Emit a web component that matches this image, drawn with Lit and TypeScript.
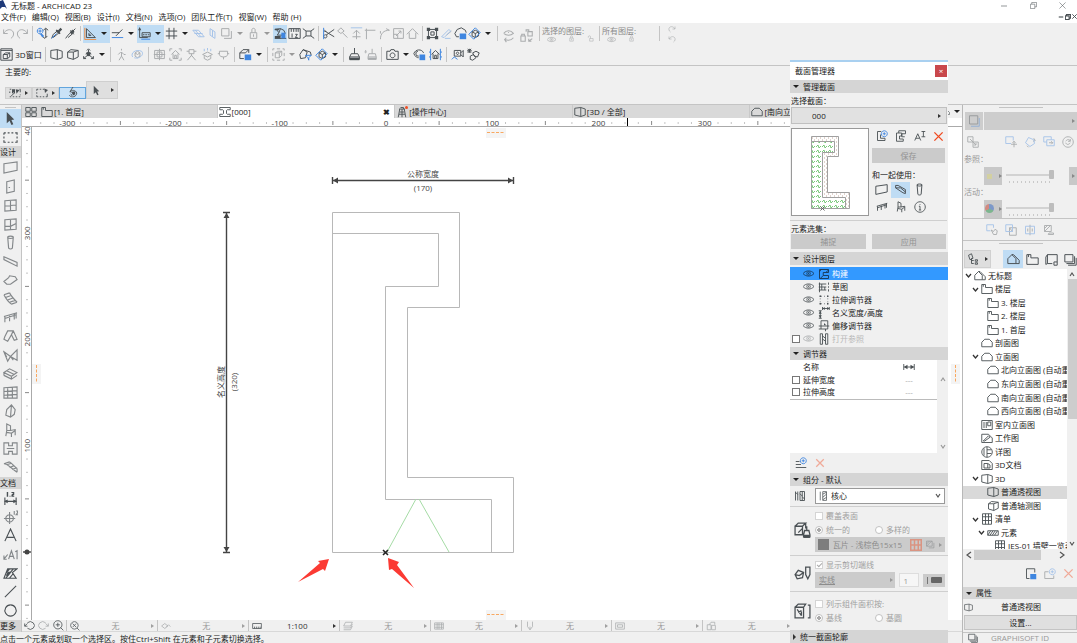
import { LitElement, html, svg, css, nothing } from "lit";
import { customElement, property } from "lit/decorators.js";
import { classMap } from "lit/directives/class-map.js";

/* Icon shapes on a 16x16 grid: d = main stroke, b = blue stroke, f = filled, g = blue fill, o = orange stroke, r = red stroke */
type Shape = { d?: string; b?: string; f?: string; g?: string; o?: string; r?: string };
const ICONS: Record<string, Shape> = {
  undo: { d: "M2 3V8H7M2 8C5 3 10 2 13 5C15.500 8 14 12 11 14" },
  redo: { d: "M14 3V8H9M14 8C11 3 6 2 3 5C.5 8 2 12 5 14" },
  find: { d: "M12 2V13M9 4L12 1.500L15 4M7 11L11 14L14 11", b: "M5 1.500A3.500 3.500 0 1 0 5.100 1.500M5 3V7M3 5H7", g: "M7 8L10 11L8 13L5 9Z" },
  dropper: { d: "M2 14L4 9L9 5M4 13L10 8", f: "M8 3L10 4L13 1L15 3L12 6L13 8L11 9L7 5Z", b: "M2 14L8 8" },
  syringe: { d: "M2 14L5 10L10 5M5 13L12 7M8 4L12 9M11 5L14 2", f: "M7 6L11 3L13 6L9 9Z" },
  triangle: { d: "M3 2V13H14ZM6 8V10.500H8.500Z", o: "M1 1V15.500H15" },
  snapline: { d: "M1 7H10M6 11L14 3", b: "M1 13H15" },
  coords: { d: "M2 2V13M2 13H12M5 7H15V12H5Z", f: "M0 4L2 0L4 4ZM6 9H8V10H6ZM9 9H11V10H9ZM12 9H14V10H12Z", b: "M4 15H15" },
  hash: { d: "M5 1V15M11 1V15M1 5H15M1 11H15" },
  planeA: { b: "M1 4H8L15 12H8ZM4 4L11 12M3 8H13" },
  planeB: { b: "M5 2L11 6V14L5 10ZM8 4V12" },
  layers: { d: "M2 2H11V11H2ZM5 14H14V5" },
  lock: { d: "M4 7H12V14H4ZM6 7V3.500C6 1 10 1 10 3.500V7M8 9V12" },
  unlock: { d: "M6 8H14V14H6ZM8 8V4C8 1 3 1 3 4V6" },
  crane: { d: "M1 3L8 2L12 4L14 8M3 3L6 7L4 10M8 2L6 7M4 10H12M1 14H15M2 12H8", f: "M1 11H8V14H1ZM1 2H6V4H1Z", g: "M9 7H14V14H9Z" },
  ruler: { d: "M1 2V14H15V2M1 2H15M4 2V6M7 2V6M10 2V6M12.500 2V6M5 8V13M9 9H11.500L9 13H12" },
  cross: { d: "M1 2L5 5M15 2L11 5M1 14L5 11M15 14L11 11M5 5H11V11H5Z" },
  scissors: { d: "M15 3L5 10M15 12L5 6M4 9.500A2 2 0 1 0 4.100 9.500", b: "M2 1V15", f: "M3 3L6 6L3 6Z" },
  wand: { d: "M2 5L6 1L10 5L6 8ZM8 7L14 13" },
  extend: { b: "M1 1H15", d: "M8 4V15M4 8L8 4L12 8M3 12H13" },
  corner: { d: "M3 15V4H14M1 4H3M3 2V4" },
  arc: { d: "M3 15C3 8 7 4 14 4M3 8V5M10 2L14 4" },
  resize: { d: "M2 2H14V14H2ZM5 11L11 5M8 5H11V8M2 9H7V14" },
  house: { d: "M1 9L8 2L15 9M4 7V14H12V7" },
  group: { d: "M3 3H13V13H3ZM6 6H10V10H6Z", f: "M1 1H5V5H1ZM11 1H15V5H11ZM1 11H5V15H1ZM11 11H15V15H11Z" },
  pens: { b: "M2 12L11 3L13 5L5 13ZM6 14H13", d: "M8 10L14 5" },
  cloud: { d: "M6 12H3L1 8L4 3L9 1L14 4L15 7", g: "M7 8H15V15H7Z" },
  orbit: { d: "M5 6L9 4L13 6V11L9 13L5 11ZM5 6L9 8L13 6M9 8V13", b: "M1 9L9 1L15 7L7 15Z" },
  eyeswap: { d: "M2 5C5 1 10 1 13 5C10 8 5 8 2 5M7 4H8M13 10C10 14 6 13 3 12M5 10L3 12L5 15" },
  lockswap: { d: "M1 8H6V14H1ZM2 8V6H5V8M9 3H14V8H9ZM7 3V1H10V3M14 11L10 14M10 11V14H13" },
  win3d: { d: "M1 1H15V15H1ZM1 3H15M4 8H9V13H4ZM4 8L7 6H12L9 8M12 6V11L9 13" },
  box1: { d: "M1 3L9 2V14L1 12ZM9 2L15 4V12L9 14" },
  box2: { d: "M2 5H9V14L2 12ZM2 5L6 2L15 3L9 5M15 3V11L9 14" },
  axes: { d: "M8 8V2M8 8L2 13M8 8L14 13M6 3L8 1L10 3M2 10V13H5M14 10V13H11M5 8A3 3 0 0 1 11 8", f: "M6 6H10V10H6Z" },
  walk: { d: "M8 1V3M7 5L4 8M8 5L11 8L13 8M8 5V10L5 15M8 10L11 15" },
  globe: { d: "M5 6L8 4L11 6V10L8 12L5 10ZM5 6L8 8L11 6", b: "M2 11C-1 6 6 1 13 4C17 8 10 14 4 12" },
  frame: { d: "M2 3H14V13H2ZM8 1V15M1 8H15M5 5H11V11H5Z" },
  homeFrame: { d: "M1 4V1H4M12 1H15V4M15 12V15H12M4 15H1V12M3 8L8 3L13 8M5 7V13H11V7M7 13V9H9V13" },
  tripod: { d: "M5 2H11V7H5ZM8 7V10M3 15L8 9L13 15M2 4H5M11 4H14" },
  rain: { d: "M2 8L8 5L14 8L8 11ZM4 10V13L8 15L12 13V10", b: "M4 1V4M8 0V3M12 1V4" },
  bulb: { d: "M3 4H13V8C13 12 3 12 3 8ZM1 7H3M13 7H15M8 11V14" },
  boxBlue: { d: "M6 13H1V6H8M1 6L5 2H12L8 6M12 2V6", g: "M7 8H15V15H7Z" },
  dashbox: { d: "M1 1H3M6 1H10M13 1H15V3M15 6V10M15 13V15H13M10 15H6M3 15H1V13M1 10V6M1 3V1M4 6H9V12H4ZM4 6L7 4H12L9 6M12 4V9L9 12" },
  funnelBox: { d: "M1 8L5 2L10 5L8 12L2 13ZM5 2L14 5L15 9", b: "M8 9H15L12 12V15L11 12Z" },
  brush: { d: "M8 0V7M2 11L4 7H12L14 11V14H2ZM2 11H14", f: "M2 12H14V15H2Z" },
  brush2: { d: "M10 1V7M5 11L6 7H14L15 11V14H5ZM5 11H15M2 3C0 7 4 7 2 3", f: "M5 12H15V14H5Z" },
  camera: { d: "M1 4H5L6 2H10L11 4H15V14H1ZM8 6A3 3 0 1 0 8.100 6" },
  eyeBlue: { d: "M1 7C3 1 11 1 13 6M1 7C3 11 5 12 7 12M6 4A3 3 0 1 0 7 10", g: "M8 8H15V15H8Z" },
  homeBlue: { d: "M3 8L8 3L13 8M5 7V13H11V7M7 13V9H9V13", b: "M2 1V15M14 1V15M0 5H2M14 5H16M0 11H2M14 11H16" },
  camMove: { d: "M4 3H12V10H4ZM12 6L15 3V11L12 8M8 5A1.500 1.500 0 1 0 8.100 5", b: "M1 14L4 11L8 14" },
  sunbox: { d: "M3 1V6M0 3.500H6M1 1L5 6M5 1L1 6M7 6L11 4L15 6L13 11L9 10ZM4 10L8 8L11 12L7 15L4 14Z" },
  cursor: { f: "M4 1L12 9L9 9.500L11 14L9 15L7 10.500L4 13Z" },
  marquee: { d: "M1 3H3M5 3H7M9 3H11M13 3H15V5M15 7V9M15 11V13H13M11 13H9M7 13H5M3 13H1V11M1 9V7M1 5V3" },
  marqueeSel: { d: "M1 3H3M5 3H7M9 3H11M15 9V13H13M11 13H9M7 13H5M3 13H1V11M1 9V7M1 5V3", f: "M11 2L16 4L12 8Z" },
  selArrow: { d: "M1 3H3M1 13H3M5 13H7M9 13H11M13 13H15M1 6V8M15 10V11M3 12L7 8M14 3H15V7", f: "M4 3H8V9L6 7L4 9ZM9 3L14 4L10 9Z" },
  magnet: { d: "M4 7C5 3 12 4 13 8C13 13 6 15 3 11M8 0L4 6L9 8M7 8L9 11M5 9L7 12", f: "M7 6L11 6L11 10L8 11Z" },
  wall: { d: "M1 4L15 2V11L1 14Z" },
  door: { d: "M4 3L12 1V13L4 15ZM6 9H7.500" },
  window: { d: "M2 3L14 2V13L2 14ZM8 3V14M2 8.500L14 7.500" },
  windowB: { d: "M2 3L14 2V13L2 14ZM8 3V14M2 10H8L14 7" },
  column: { d: "M5 2C6 1 10 1 11 2L10 14C9 15 7 15 6 14ZM5 3C7 4 9 4 11 3" },
  beam: { d: "M1 3L15 9V13L1 6Z" },
  beamSel: { d: "M2 3L5 3L14 8V13L11 12L2 6ZM2 6L8 6L14 11" },
  slab: { d: "M1 9L6 5L7 3L13 4L15 7L8 12L4 12Z" },
  stair: { d: "M1 4C3 8 6 12 9 14M7 2C9 6 12 9 15 12M1 4L7 2M2.500 7L8 5M5 9.500L10.500 7.500M7 12L13 10M9 14L15 12" },
  rail: { d: "M1 7L15 3M2 7V13M7 6V12M12 4V10M14 3V9M2 9L14 5" },
  roof: { d: "M2 8L5 2H11L15 11L12 12L9 6L5 13L1 11ZM9 6L11 2" },
  shell: { d: "M1 4L8 9L15 2V13L8 9L5 14ZM1 4L4 10M8 9L11 13" },
  mesh: { d: "M1 7L7 3L15 7L9 11ZM1 10L9 14L15 10M4 5L12 9M1 7V10M9 11V14" },
  patch: { d: "M1 4C5 4 9 9 15 13M7 2C10 4 12 7 15 9M1 4L7 2M4 5L9 3.500M7 8L12 6M15 9V13M10 10L14 8.500" },
  curtain: { d: "M1 3L15 2V14H1ZM5 3V14M10 2V14M1 7L15 6M1 11L15 10" },
  morph: { d: "M3 12L4 6L9 1L13 6L12 11L8 14ZM9 1L8 14" },
  chair: { d: "M4 1L8 3V8H4ZM4 8L3 14M8 8L13 7V13M4 10L9 11V15M9 11L13 8" },
  zone: { d: "M1 2H6V5H10V2H15V14H10V11H6V14H1ZM4 8H12" },
  dim: { d: "M2 7V15M14 7V15M2 11H14", f: "M1 11L5 9V13ZM15 11L11 9V13ZM4 1H5.500V6H4ZM7 5H8V6H7ZM9 1H12V4L10.500 5H12V6H9V4L11 2H9Z" },
  level: { d: "M7 5A4 4 0 1 0 7.100 5M7 2V15M1 9H13M12 1V5M14 1H15.500V3L14 5H16" },
  textA: { d: "M2 14L8 1L14 14M4.500 10H11.500" },
  labelA1: { d: "M1 13L5 8M1 9V13H4M6 13L9 4L12 13M7 10H11M13 5L15 4V13" },
  hatch: { d: "M1 13L5 3H15L10 7L14 13ZM3 8L7 3M3 13L11 3M7 13L11 8M4 6L7 3" , f: "M3 10L5 6L9 6L5 11Z" },
  line: { d: "M2 14L14 2" },
  circle: { d: "M8 2A6 6 0 1 0 8.100 2" },
  grid4: { d: "M1 2H7V7H1ZM9 2H15V7H9ZM1 9H7V14H1ZM9 9H15V14H9Z" },
  folder: { d: "M1 14V2H6V6H15V14ZM3 2V5" },
  section: { d: "M1 2H15V5H11L10 6V10L11 11H15V14H1V11H5L6 10V6L5 5H1Z" },
  tower: { d: "M5 4L3 15M11 4L13 15M4 4H12M6 2H10V4M5 8H11M4 11H12M8 4V15" },
  elevation: { d: "M1 13V7L5 3H11L15 7V13Z" },
  zoomPrev: { d: "M5 4A6 5.500 0 1 1 5 12M1 5V9H5M1 9L5 5" },
  zoomNext: { d: "M11 4A6 5.500 0 1 0 11 12M15 5V9H11M15 9L11 5" },
  zoomIn: { d: "M7 1A6 6 0 1 0 7.100 1M7 4V10M4 7H10M11 11L15 15" },
  zoomFit: { d: "M7 1A6 6 0 1 0 7.100 1M4 4L10 10M10 4L4 10M11 11L15 15" },
  angle: { d: "M1 8L6 4L11 8L6 12ZM8 10L12 6L15 9" },
  scale: { d: "M1 4H15V12H1ZM4 9V12M7 9V12M10 9V12M13 9V12" },
  stack: { d: "M4 2H15L12 8H1ZM1 11H12L15 5M1 14H12L15 8" },
  keys: { d: "M1 3H15V13H1ZM1 6H15M1 10H15M5 3V13M8 3V13M12 3V13" },
  pen: { d: "M4 1V9L8 14L12 9V1M8 9V14" },
  rect2: { d: "M1 3H15V13H1ZM4 6H12V10H4Z" },
  revise: { d: "M2 6H8V14H2ZM5 6L8 2H14V6M9 7H15V14H9Z" },
  newProfile: { d: "M7 2H2V14H12V11H6V6", b: "M11 1A4 4 0 1 0 11.100 1M11 3V7M9 5H13" },
  dupProfile: { d: "M9 4H2V15H11V12H6V8H9ZM5 4V1H14V5H9V9H13" },
  rename: { d: "M1 14L5 5L9 14M2.500 11H7.500M10 2H15M12.500 2V9M10 9H15" },
  del: { r: "M2 2L14 14M14 2L2 14" },
  info: { d: "M8 1A7 7 0 1 0 8.100 1M8 7V12M6.500 7H8M6.500 12H9.500M8 4V5" },
  eye: { d: "M0 8C4 3 12 3 16 8C12 13 4 13 0 8M8 5.500A2.500 2.500 0 1 0 8.100 5.500M8 7V9" },
  cshape: { d: "M14 2H2V14H14V10H7V6H14ZM14 3L11 5M4 2L2 5M7 10L3 14" },
  draft: { d: "M2 2V15M1 4H11M1 8H11M1 12H11M5 4V12M9 8V12M14 2V5M14 7V9M14 11V14" },
  stretch: { d: "M3 3H5M8 3H9M12 3H13M3 13H5M8 13H9M12 13H13M3 6V7M3 10V11M13 6V7M13 10V11", f: "M2 2H4V4H2ZM12 2H14V4H12ZM2 12H4V14H2ZM12 12H14V14H12Z" },
  nominal: { d: "M3 5V15M1 5H5M1 15H5M6 2H15M6 0V4M15 0V4", f: "M3 5L5 9H1ZM3 15L5 11H1ZM6 2L9 0V4ZM15 2L12 0V4Z" },
  offset: { d: "M4 1H13V12H4ZM1 8H15M10 12V15M1 12H4", f: "M8 4L11 7H8Z" },
  opening: { d: "M3 1H6V15H3ZM10 1H13V15H10ZM6 4L10 7M6 8L10 11" },
  width: { d: "M1 4V12M15 4V12M2 8H14", f: "M1 8L6 5V11ZM15 8L10 5V11Z" },
  addLine: { d: "M1 6H6M1 14H15M1 10H8", b: "M11 1A4 4 0 1 0 11.100 1M11 3V7M9 5H13" },
  component: { d: "M2 2V14M5 2V14M2 3L5 6M8 2H14V14H8ZM11 2V14M8 5L11 8M11 9L14 12" },
  core: { d: "M6 1H12V15H6ZM6 5L12 2M6 10L12 5M6 14L12 10M2 1V15" },
  cover: { d: "M1 4H8V12H1ZM1 4L4 1H11L8 4M11 6V1M4 10L8 6M12 4V8M9 12L10 8H14L15 12V14H9Z", f: "M9 12H15V15H9Z" },
  cutEnd: { d: "M1 9L4 5L9 7L8 12L3 13ZM1 9L5 10L9 7M11 2H15V9L13 13L11 9Z" },
  listing: { d: "M1 4H9V14H1ZM1 4L4 1H11L9 4M3 6L7 12M7 7L4 9M7 12V8M13 2H15V14H13" },
  swap: { d: "M1 1H8V8H1ZM8 8H15V15H8ZM4 4L12 12M9 12H12V9" },
  moveSq: { b: "M8 10H1V1H11V6", d: "M12 7V15M8 11H16M10 9L12 7L14 9" },
  rotSq: { b: "M2 9L6 2L13 5L14 10L8 14Z", d: "M13 3L15 6L12 7M6 15L4 13" },
  syncSq: { b: "M5 8H1V1H11V5M5 5H15V13H5Z", d: "M8 9H13M11 7L13 9L11 11" },
  refresh: { d: "M8 1A7 7 0 1 0 8.100 1M5 7C7 4 10 4 11 7M11 9C9 12 6 12 5 9M11 4V7H8" },
  square2: { d: "M2 1H13V12H2Z", b: "M4 15H15V4" },
  handSq: { b: "M6 9H1V1H10V5", d: "M7 8L10 14H14L15 9L12 7L10 10Z" },
  overlap: { b: "M1 1H10V10H1Z", d: "M6 5H15V15H6ZM6 5L10 10" },
  splitSq: { b: "M2 3H14V13H2Z", d: "M8 1V15M5 6V10M11 6V10" },
  erase: { d: "M2 2H11V10H2ZM2 6L6 2M2 10L10 2M8 12H14V14H7Z" },
  pencilTree: { d: "M2 3L6 1L8 7L4 9ZM6 7V14H9M6 10H9M11 9H14V11H11ZM11 13H14V15H11Z" },
  homes: { d: "M1 13V7L6 2L11 7V13ZM6 2H8L15 9V13H11" },
  pages: { d: "M3 13V2H15V11M3 13L1 14V5L3 2M3 13H9M11 11H15V15H11Z" },
  docs: { d: "M1 2H11V11H1ZM3 13H13V4M5 15H15V6" },
  interior: { d: "M1 2H15V14H1ZM4 4V12M7 4V12M9 4H13V9H9Z" },
  worksheet: { d: "M1 14V3H10L15 8V14ZM3 12L10 5L12 7L5 12Z" },
  detail: { d: "M8 1A7 7 0 1 0 8.100 1M8 1V15M4 3V13M8 5H14M8 10H14" },
  doc3d: { d: "M1 14V2H11L15 6V14ZM4 6H9V12H4ZM9 6L12 8V12H9" },
  schedule: { d: "M2 1H14V15H2ZM6 1V15M10 1V15M2 5H14M2 10H14" },
  hatchbar: { d: "M1 5H15V11H1ZM1 11L5 5M4 11L8 5M7 11L11 5M10 11L14 5" },
  saveView: { d: "M6 14H2V1H13V6", g: "M7 8H15V15H7Z" },
  newView: { d: "M6 5H1V14H13V10", b: "M11 1A4 4 0 1 0 11.100 1M11 3V7M9 5H13" },
  hatchFill: { d: "M1 2H11V11H1ZM1 7L6 2M1 11L10 2M5 14H14V5" },
  tile: { r: "M1 1H15V15H1ZM6 1V15M11 1V15M1 8H15" },
  winmin: { d: "M2 8H14" },
  winmax: { d: "M1 5H11V15H1ZM4 5V1H15V11H11" },
  winclose: { d: "M1 1L15 15M15 1L1 15" },
};

const icon = (name: string, size = 13, cls = "") => {
  const s = ICONS[name] ?? {};
  return html`<svg class="icon ${cls}" width=${size} height=${size} viewBox="0 0 16 16" aria-hidden="true">
    ${s.d ? svg`<path class="s" d=${s.d}/>` : nothing}${s.b ? svg`<path class="b" d=${s.b}/>` : nothing}
    ${s.f ? svg`<path class="f" d=${s.f}/>` : nothing}${s.g ? svg`<path class="g" d=${s.g}/>` : nothing}
    ${s.o ? svg`<path class="o" d=${s.o}/>` : nothing}${s.r ? svg`<path class="r" d=${s.r}/>` : nothing}</svg>`;
};

const chevron = (d: string) => html`<svg class="ch" width="6" height="10" viewBox="0 0 6 10" aria-hidden="true"><path d=${d}/></svg>`;
const UP = "M1 7L3 4L5 7", DOWN = "M1 3L3 6L5 3", LEFT = "M5 2L1 5L5 8", RIGHT = "M1 2L5 5L1 8";

const base = css`
  *, *::before { box-sizing: border-box; }
  :host { font: 8px/12px "Open Sans", "Noto Sans CJK SC", sans-serif; color: #222; }
  button, input, select { font: inherit; color: inherit; margin: 0; padding: 0; border: 0; background: none; }
  button { display: flex; align-items: center; justify-content: center; white-space: nowrap; }
  .icon { display: block; flex: none; }
  .icon path { fill: none; stroke-width: 1.2; }
  .icon .s { stroke: #4a5054; }
  .icon .b { stroke: #3f86e0; }
  .icon .f { fill: #4a5054; }
  .icon .g { fill: #3f86e0; }
  .icon .o { stroke: #f08a3c; }
  .icon .r { stroke: #f04a20; stroke-width: 2; }
  .dim { opacity: 0.42; }
  .tri { width: 0; height: 0; flex: none; border: 3px solid transparent; border-left: 3px solid #333; border-right: 0; }
  .tri.small { border-width: 2px; border-left-width: 3px; border-right-width: 0; }
  .tri.down { border: 3px solid transparent; border-top: 3px solid #222; border-bottom: 0; }
  .ch { display: block; flex: none; }
  .ch path { fill: none; stroke: #555; stroke-width: 1.2; }
  .section { display: flex; align-items: center; gap: 4px; width: 100%; height: 13px; padding: 0 3px; background: #d5d5d5; justify-content: flex-start; }
  input[type="range"] { appearance: none; width: 48px; height: 12px; }
  input[type="range"]::-webkit-slider-runnable-track { height: 2px; background: #d2d2d2; }
  input[type="range"]::-webkit-slider-thumb { appearance: none; width: 5px; height: 9px; margin-top: -4px; background: #bdbdbd; border-radius: 1px; }
  input[type="checkbox"] { appearance: none; flex: none; width: 8px; height: 8px; border: 1px solid #777; background: #fff; }
  input[type="radio"] { appearance: none; flex: none; width: 8px; height: 8px; border: 1px solid #c2c2c2; border-radius: 50%; background: #fff; }
  input[type="radio"]:checked { background: radial-gradient(#aaa 2px, #fff 2px); }
`;

type Tool = string;
/* "|" separator, "v" menu arrow, leading "-" disabled, leading "*" active */
const BAR1: Tool[] = ["-undo", "-redo", "|", "find", "dropper", "syringe", "|", "*triangle", "*v", "snapline", "v", "*coords", "*v", "hash", "v", "-planeA", "-planeB", "-layers", "-v", "-lock", "-v", "*crane", "ruler", "cross", "|", "scissors", "-wand", "-extend", "-corner", "-arc", "-resize", "-house", "|", "group", "-pens", "cloud", "orbit", "v", "|"];
const BAR2: Tool[] = ["box1", "box2", "axes", "v", "|", "-walk", "-globe", "|", "-frame", "-homeFrame", "-tripod", "-rain", "-bulb", "|", "boxBlue", "v", "|", "-dashbox", "-v", "funnelBox", "orbit", "v", "|", "brush", "-brush2", "|", "camera", "v", "eyeBlue", "homeBlue", "|", "camMove", "sunbox"];

@customElement("tool-bars")
class ToolBars extends LitElement {
  static styles = [base, css`
    :host { display: block; background: #f0f0f0; }
    .bar { display: flex; align-items: center; height: 21px; padding-left: 1px; }
    .bar + .bar { border-bottom: 1px solid #c4c4c4; padding-left: 0; height: 22px; }
    .t { width: 14px; height: 18px; flex: none; }
    .wide .t { width: 16px; }
    .t.v { width: 13px; }
    .wide .t.v { width: 11px; }
    .t.on { background: #bfdcf4; }
    .sep { width: 6px; height: 15px; flex: none; display: flex; justify-content: center; }
    .sep::before { content: ""; width: 1px; background: #c4c4c4; }
    .win { width: 42px; gap: 2px; }
    .pair { display: flex; gap: 4px; padding: 4px 2px 0 2px; }
    .layers { display: flex; flex-direction: column; width: 54px; color: #8a8a8a; line-height: 9px; padding-top: 2px; }
    .layers div { display: flex; gap: 12px; padding-left: 5px; }
    .spin { display: flex; flex-direction: column; gap: 2px; padding-left: 6px; }
    .options { height: 39px; padding: 0 5px; border-bottom: 1px solid #c4c4c4; line-height: 11px; }
    .strip { display: flex; align-items: flex-end; padding-top: 4px; }
    .opt { width: 27px; height: 12px; gap: 4px; background: #dfdfdf; border: 1px solid #cfcfcf; }
    .opt.on { background: #c9e2f7; border-color: #62a5dd; }
    .opt.tall { width: 32px; height: 18px; gap: 9px; }
  `];
  tool(t: Tool) {
    if (t === "|") return html`<span class="sep"></span>`;
    const off = t[0] === "-", on = t[0] === "*";
    const name = off || on ? t.slice(1) : t;
    return html`<button class=${classMap({ t: true, v: name === "v", on })} ?disabled=${off} aria-label=${name}>
      ${name === "v" ? html`<span class="tri down ${off ? "dim" : ""}"></span>` : icon(name, 13, off ? "dim" : "")}</button>`;
  }
  render() {
    return html`
      <div class="bar">${BAR1.map((t) => this.tool(t))}
        <div class="pair">${icon("eyeswap", 14, "dim")}${icon("lockswap", 14, "dim")}</div>
        <span class="sep"></span>
        <div class="layers"><span>选择的图层:</span><div>${icon("eye", 9, "dim")}${icon("lock", 7, "dim")}${icon("unlock", 7, "dim")}</div></div>
        <span class="sep"></span>
        <div class="layers"><span>所有图层:</span><div>${icon("eye", 9, "dim")}${icon("lock", 7, "dim")}</div></div>
        <span class="sep"></span>
        <div class="spin">${icon("redo", 8, "dim")}${icon("undo", 8, "dim")}</div>
      </div>
      <div class="bar wide"><button class="win">${icon("win3d", 13)}3D窗口</button><span class="sep"></span>${BAR2.map((t) => this.tool(t))}</div>
      <div class="options">主要的:
        <div class="strip">
          <button class="opt" aria-label="marquee">${icon("selArrow", 12)}<span class="tri small"></span></button>
          <button class="opt" aria-label="selection">${icon("marqueeSel", 12)}<span class="tri small"></span></button>
          <button class="opt on" aria-label="magnet">${icon("magnet", 12)}</button>
          <button class="opt tall" aria-label="arrow">${icon("cursor", 11)}<span class="tri small"></span></button>
        </div>
      </div>`;
  }
}

const DESIGN = ["wall", "door", "window", "windowB", "column", "beam", "slab", "stair", "rail", "roof", "shell", "mesh", "curtain", "morph", "chair", "zone", "patch"];
const DOCS = ["dim", "level", "textA", "labelA1", "hatch", "line", "circle"];

@customElement("tool-box")
class ToolBox extends LitElement {
  static styles = [base, css`
    :host { display: flex; flex-direction: column; width: 22px; flex: none; background: #f0f0f0; border-right: 1px solid #c4c4c4; }
    .grip { height: 3px; margin: 0 5px 1px; border-bottom: 1px solid #c4c4c4; }
    .tool { flex: 1 1 0; min-height: 0; width: 100%; padding-right: 1px; }
    .tool.on { background: #bfdcf4; }
    .head { height: 12px; background: #d5d5d5; line-height: 12px; white-space: nowrap; }
    .soft { opacity: 0.65; }
  `];
  render() {
    const tool = (n: string, cls = "", soft = "") => html`<button class="tool ${cls}" aria-label=${n}>${icon(n, 15, soft)}</button>`;
    return html`<div class="grip"></div>${tool("cursor", "on")}${tool("marquee")}
      <div class="head">设计</div>${DESIGN.map((n) => tool(n, "", "soft"))}
      <div class="head">文档</div>${DOCS.map((n) => tool(n, "", n === "level" || n === "labelA1" ? "soft" : ""))}
      <div class="head">更多</div>`;
  }
}

const TABS = [
  { icon: "folder", label: "[1. 首层]" },
  { icon: "section", label: "[000]", active: true },
  { icon: "tower", label: "[操作中心]", dot: true },
  { icon: "box1", label: "[3D / 全部]" },
  { icon: "elevation", label: "[南向立面图]" },
];
const QUICK = [["zoomFit", "无"], ["angle", "无"], ["scale", "1:100"], ["stack", "无"], ["keys", "无"], ["pen", "无"], ["rect2", "无"], ["revise", "无"]];

@customElement("profile-editor")
class ProfileEditor extends LitElement {
  static styles = [base, css`
    :host { display: flex; flex-direction: column; flex: 1; min-width: 0; background: #fff; }
    .tabs { display: flex; height: 13px; flex: none; background: #d9d9d9; }
    .tabs .all { width: 18px; }
    .tab { flex: 1 1 0; min-width: 0; justify-content: flex-start; gap: 1px; padding: 0 4px 0 1px; border-right: 1px solid #c9c9c9; overflow: hidden; }
    .tab.on { background: #fff; }
    .x { margin-left: auto; font-weight: bold; }
    .marked { position: relative; display: flex; }
    .dot { position: absolute; right: 0; top: 0; width: 3px; height: 3px; border-radius: 50%; background: #f04e23; }
    .ends { display: flex; align-items: center; justify-content: flex-end; gap: 4px; width: 34px; padding-right: 2px; background: #f0f0f0; }
    .top { display: flex; height: 9px; flex: none; border-bottom: 1px solid #aaa; }
    .mid { display: flex; flex: 1; min-height: 0; }
    .left { width: 10px; flex: none; border-right: 1px solid #aaa; }
    svg.fill { display: block; width: 100%; height: 100%; overflow: hidden; }
    .num { font-size: 8px; fill: #444; text-anchor: middle; }
    .tick { stroke: #888; }
    .cur { stroke: #000; stroke-width: 1; }
    .outline { fill: none; stroke: #b8b8b8; }
    .guide { fill: none; stroke: #a5dba5; }
    .dimline { fill: none; stroke: #444; stroke-width: 1.4; }
    .mark { fill: none; stroke: #222; stroke-width: 1.6; }
    .arrow { fill: #444; }
    .dimtext { font-size: 8px; fill: #444; text-anchor: middle; }
    .red { fill: #fb3a33; }
    .pad { fill: #f4f4f4; }
    .dash { stroke: #f9a860; stroke-dasharray: 3 1.5; }
    .quick { display: flex; height: 12px; flex: none; background: #f0f0f0; border-bottom: 1px solid #d8d8d8; }
    .zooms { display: flex; align-items: center; justify-content: space-around; width: 45px; flex: none; border-right: 1px solid #c4c4c4; }
    .q { flex: 1 1 0; justify-content: space-between; padding: 0 3px; border-right: 1px solid #c4c4c4; color: #999; }
    .q.live { color: #333; }
    .rest { flex: 2 2 0; }
  `];
  hTicks() {
    const out = [];
    for (let i = -26; i <= 42; i++) {
      const x = 364 + i * 13.28;
      if (i % 8 === 0) out.push(svg`<text class="num" x=${x} y="8">${(i / 8) * 100}</text>`);
      else out.push(svg`<path class="tick" d=${i % 4 === 0 ? `M${x} 3V7` : `M${x} 4.500V5.500`}/>`);
    }
    return out;
  }
  vTicks() {
    const out = [];
    for (let i = -5; i <= 31; i++) {
      const y = 425 - i * 13.28;
      if (i === 0) continue;
      if (i % 8 === 0) out.push(svg`<text class="num" transform="translate(8 ${y}) rotate(-90)">${(i / 8) * 100}</text>`);
      else out.push(svg`<path class="tick" d=${i % 4 === 0 ? `M3 ${y}H7` : `M4.500 ${y}H5.500`}/>`);
    }
    out.push(svg`<text class="num" transform="translate(8 4) rotate(-90)">40</text>`);
    return out;
  }
  render() {
    return html`
      <div class="tabs"><button class="all" aria-label="overview">${icon("grid4", 12)}</button>
        ${TABS.map((t) => html`<button class=${classMap({ tab: true, on: !!t.active })}>
          <span class="marked">${icon(t.icon, 12)}${t.dot ? html`<span class="dot"></span>` : nothing}</span>${t.label}
          ${t.active ? html`<span class="x">✖</span>` : nothing}</button>`)}
        <div class="ends">${icon("homes", 8)}<span class="tri down"></span></div></div>
      <div class="top"><svg class="fill">${this.hTicks()}<path class="cur" d="M605.500 0V9"/></svg></div>
      <div class="mid">
        <div class="left"><svg class="fill">${this.vTicks()}<path class="dimline" d="M1 425H9"/><circle class="arrow" cx="5" cy="425" r="2.500"/></svg></div>
        <svg class="fill" role="img" aria-label="000">
          <g transform="translate(354 425)">
            <path class="outline" d="M-53.500 -339.500H73.500V-244.500H21.500V-74.500H127.500V.5H-53.500ZM-53.500 -318.500H52.500V-265.500H-.5V-52.500H105.500V.5"/>
            <path class="guide" d="M1 0L30 -53M33 -53L63 0"/>
            <path class="dimline" d="M-53 -371.500H127M-53.500 -375V-368M127.500 -375V-368M-159.500 -339V0M-163 -339.500H-156M-163 .5H-156"/>
            <path class="arrow" d="M-53 -371.500L-48 -374.500V-368.500ZM127 -371.500L122 -374.500V-368.500ZM-159.500 -339L-162.500 -334H-156.500ZM-159.500 0L-162.500 -5H-156.500Z"/>
            <text class="dimtext" x="37" y="-375">公称宽度</text><text class="dimtext" x="37" y="-361">(170)</text>
            <text class="dimtext" transform="translate(-162 -170) rotate(-90)">名义高度</text>
            <text class="dimtext" transform="translate(-149 -170) rotate(-90)">(320)</text>
            <path class="mark" d="M-3 -2L2 3M2 -2L-3 3"/>
            <path class="red" d="M-57 7L-68 9L-66 11L-88 30L-63 17L-61 19ZM2 6L13 10L11 13L28 36L6 17L3 18Z"/>
            <rect class="pad" x="100" y="-424" width="20" height="10"/><path class="dash" d="M101 -419.500H119"/>
            <rect class="pad" x="100" y="58" width="20" height="10"/><path class="dash" d="M101 62.500H119"/>
            <rect class="pad" x="-354" y="-188" width="9" height="20"/><path class="dash" d="M-349.500 -187V-169"/>
            <rect class="pad" x="565" y="-188" width="9" height="20"/><path class="dash" d="M569.500 -187V-169"/>
          </g></svg>
      </div>
      <div class="quick"><div class="zooms">${icon("zoomPrev", 11)}${icon("zoomNext", 11, "dim")}${icon("zoomIn", 11)}</div>
        ${QUICK.map(([n, t]) => { const live = t !== "无"; return html`<button class=${classMap({ q: true, live })}>
          ${icon(n, 10, live || n === "zoomFit" ? "" : "dim")}${t}<span class="tri small ${live ? "" : "dim"}"></span></button>`; })}
        <div class="rest"></div></div>`;
  }
}

const LAYERS = [["cshape", "构建"], ["draft", "草图"], ["stretch", "拉伸调节器"], ["nominal", "名义宽度/高度"], ["offset", "偏移调节器"]];

@customElement("profile-manager")
class ProfileManager extends LitElement {
  static styles = [base, css`
    :host { display: flex; flex-direction: column; background: #f0f0f0; border-top: 2px solid #a9d0f0; overflow: hidden; }
    .title { display: flex; align-items: center; justify-content: space-between; height: 18px; flex: none; padding: 0 1px 0 5px; background: #fff; }
    .close { width: 12px; height: 12px; background: #c9484c; color: #fff; }
    .section { flex: none; }
    .lab { height: 13px; flex: none; padding: 0 1px; line-height: 16px; }
    .lab.first { height: 14px; }
    .pick { height: 17px; flex: none; justify-content: space-between; padding: 0 5px 0 20px; margin: 0 1px; background: #e1e1e1; border: 1px solid #c0c0c0; }
    .cols { display: flex; gap: 3px; padding: 4px 2px 4px 1px; flex: none; border-bottom: 1px solid #cfcfcf; margin-right: 1px; }
    .preview { width: 78px; height: 88px; flex: none; border: 1px solid #999; background: #fff; }
    .preview svg { display: block; }
    .side { flex: 1; min-width: 0; }
    .row { display: grid; grid-template-columns: repeat(4, 19px); align-items: center; height: 16px; }
    .row.use { height: 17px; }
    .row button { height: 16px; }
    .row .on { background: #bfdcf4; }
    .grey { flex: 1; width: 100%; height: 15px; background: #cbcbcb; color: #929292; }
    .side .grey { margin: 4px 0 6px; }
    .pairs { display: flex; gap: 6px; padding: 0 2px 3px 1px; flex: none; }
    .list { padding: 2px 0; flex: none; }
    .item { display: grid; grid-template-columns: 11px 15px 13px 1fr; align-items: center; height: 13px; padding: 0 2px; line-height: 13px; }
    .item .name { padding-left: 1px; }
    .item.on { background: #3399ff; color: #fff; }
    .item.on .s { stroke: #173450; }
    .item.off .name { color: #b8b8b8; }
    .adj { display: flex; height: 93px; flex: none; background: #fff; }
    .grid { flex: 1; }
    table { width: 100%; border-collapse: collapse; }
    td, th { padding: 0; height: 13px; font-weight: normal; text-align: left; }
    td { line-height: 12px; }
    .val { width: 56px; text-align: center; color: #aaa; }
    .val .icon { margin: 0 auto; }
    tbody { border-bottom: 1px solid #bbb; }
    td label { display: flex; align-items: center; gap: 3px; padding-left: 2px; }
    th:first-child { padding-left: 13px; }
    .vbar { flex: none; display: flex; flex-direction: column; justify-content: space-between; align-items: center; width: 11px; padding: 14px 0 1px; background: #f0f0f0; }
    .vbar path { stroke: #999; }
    .acts { display: flex; gap: 8px; align-items: center; height: 20px; padding-left: 5px; flex: none; }
    .block { display: grid; grid-template-columns: 25px 1fr; padding: 2px 3px 2px 0; border-bottom: 1px solid #cfcfcf; align-items: center; flex: none; }
    .block.tall { padding-bottom: 3px; }
    .block.last { border-bottom: 0; padding-top: 5px; }
    .block > .icon { margin-left: 4px; }
    .lines { display: flex; flex-direction: column; min-width: 0; color: #a0a0a0; }
    .lines > * { min-height: 13px; }
    .lines input[type="checkbox"] { border-color: #d4d4d4; }
    .lines input[type="checkbox"]:checked::before { content: ""; display: block; width: 5px; height: 3px; margin: 1px 0 0 1px; border: solid #aaa; border-width: 0 0 1px 1px; transform: rotate(-45deg); }
    label.c { display: flex; align-items: center; gap: 3px; }
    .lines .rads { display: grid; grid-template-columns: 60px 1fr; height: 15px; }
    .combo { display: flex; align-items: center; height: 16px; border: 1px solid #999; background: #fff; color: #222; padding-left: 3px; gap: 2px; }
    .combo select { appearance: none; flex: 1; height: 14px; outline: none; }
    .combo .ch { margin-right: 3px; }
    .mat { height: 15px; background: #cbcbcb; color: #8c8c8c; justify-content: flex-start; gap: 4px; padding: 0 3px; }
    .swatch { width: 11px; height: 11px; background: #7d7d7d; }
    .mat .tri, .ln .tri { border-left-color: #999; }
    .push { margin-left: auto; }
    .split { display: flex; gap: 4px; align-items: center; height: 18px; }
    .ln { width: 82px; height: 16px; background: #cbcbcb; color: #8c8c8c; justify-content: space-between; padding: 0 2px 0 4px; text-decoration: underline; }
    .num { width: 20px; height: 14px; padding-left: 3px; background: #f6f6f6; border: 1px solid #ddd; color: #999; }
    .penbox { width: 22px; height: 13px; background: #cbcbcb; gap: 3px; }
    .penbox::before { content: ""; width: 1px; height: 7px; background: #777; }
    .penbox .swatch { height: 6px; border-radius: 1px; background: #666; }
    .end { margin-top: auto; }
  `];
  render() {
    return html`
      <div class="title">截面管理器<button class="close" aria-label="close">×</button></div>
      <button class="section"><span class="tri down"></span>管理截面</button>
      <div class="lab first">选择截面：</div>
      <button class="pick">000<span class="tri small"></span></button>
      <div class="cols">
        <div class="preview"><svg width="76" height="86" viewBox="0 0 76 86">
          <defs>
            <pattern id="green" width="6" height="5" patternUnits="userSpaceOnUse"><path d="M0 3L2 1L3 4L5 2" fill="none" stroke="#6fc46f" stroke-width=".9"/></pattern>
            <pattern id="tan" width="4" height="4" patternUnits="userSpaceOnUse"><path d="M0 1H1M2 3H3" stroke="#c3a89c" stroke-width="1"/></pattern>
          </defs>
          <path d="M19.500 7.500H46.500V27.500H35.500V63.500H57.500V79.500H19.500Z" fill="url(#tan)" stroke="#a0a0a0"/>
          <path d="M19.500 12.500H42.500V23.500H30.500V68.500H53.500V79.500H19.500Z" fill="#fff"/>
          <path d="M19.500 12.500H42.500V23.500H30.500V68.500H53.500V79.500H19.500Z" fill="url(#green)" stroke="#a0a0a0"/>
          <path d="M28.500 77.500L32.500 81.500M32.500 77.500L28.500 81.500" stroke="#666"/>
        </svg></div>
        <div class="side">
          <div class="row"><button aria-label="new">${icon("newProfile", 12)}</button><button aria-label="duplicate">${icon("dupProfile", 12)}</button><button aria-label="rename">${icon("rename", 12)}</button><button aria-label="delete">${icon("del", 11)}</button></div>
          <button class="grey" disabled>保存</button>
          <div>和一起使用：</div>
          <div class="row use"><button aria-label="wall">${icon("wall", 13)}</button><button class="on" aria-label="beam">${icon("beamSel", 13)}</button><button aria-label="column">${icon("column", 13)}</button></div>
          <div class="row use"><button aria-label="rail">${icon("rail", 12)}</button><button aria-label="object">${icon("chair", 12)}</button><button aria-label="info">${icon("info", 12)}</button></div>
        </div>
      </div>
      <div class="lab">元素选集：</div>
      <div class="pairs"><button class="grey" disabled>捕捉</button><button class="grey" disabled>应用</button></div>
      <button class="section"><span class="tri down"></span>设计图层</button>
      <div class="list">
        ${LAYERS.map(([i, t], n) => html`
          <div class=${classMap({ item: true, on: n === 0 })}><span></span>${icon("eye", 11)}${icon(i, 12)}<span class="name">${t}</span></div>`)}
        <label class="item off"><input type="checkbox">${icon("eye", 11, "dim")}${icon("opening", 12)}<span class="name">打开参照</span></label>
      </div>
      <button class="section"><span class="tri down"></span>调节器</button>
      <div class="adj"><div class="grid"><table>
        <thead><tr><th>名称</th><th class="val">${icon("width", 12)}</th></tr></thead>
        <tbody><tr><td><label><input type="checkbox">延伸宽度</label></td><td class="val">---</td></tr>
        <tr><td><label><input type="checkbox">拉伸高度</label></td><td class="val">---</td></tr></tbody>
      </table></div><div class="vbar">${chevron(UP)}${chevron(DOWN)}</div></div>
      <div class="acts">${icon("addLine", 12)}${icon("del", 10, "dim")}</div>
      <button class="section"><span class="tri down"></span>组分 - 默认</button>
      <div class="block">${icon("component", 12)}<div class="combo">${icon("core", 10)}<select aria-label="component"><option>核心</option></select>${chevron(DOWN)}</div></div>
      <div class="block tall">${icon("cover", 17)}<div class="lines">
        <label class="c"><input type="checkbox" disabled>覆盖表面</label>
        <div class="rads"><label class="c"><input type="radio" name="cover" checked disabled>统一的</label><label class="c"><input type="radio" name="cover" disabled>多样的</label></div>
        <button class="mat" disabled><span class="swatch"></span>瓦片 - 浅棕色15x15<span class="push"></span>${icon("tile", 12, "dim")}${icon("hatchFill", 9, "dim")}<span class="tri small"></span></button>
      </div></div>
      <div class="block">${icon("cutEnd", 17)}<div class="lines">
        <label class="c"><input type="checkbox" checked disabled>显示剪切端线</label>
        <div class="split"><button class="ln" disabled>实线<span class="tri small"></span></button><input class="num" aria-label="pen" value="1" disabled><button class="penbox" aria-label="pen colour" disabled><span class="swatch"></span></button></div>
      </div></div>
      <div class="block last">${icon("listing", 17)}<div class="lines">
        <label class="c"><input type="checkbox" disabled>列示组件面积按:</label>
        <div class="rads"><label class="c"><input type="radio" name="list" checked disabled>基线</label><label class="c"><input type="radio" name="list" disabled>基圆</label></div>
      </div></div>
      <button class="section end"><span class="tri"></span>统一截面轮廓</button>`;
  }
}

type Node = { lv: number; icon: string; t: string; open?: boolean; sel?: boolean };
const TREE: Node[] = [
  { lv: 0, icon: "homes", t: "无标题", open: true },
  { lv: 1, icon: "folder", t: "楼层", open: true },
  { lv: 2, icon: "folder", t: "3. 楼层" }, { lv: 2, icon: "folder", t: "2. 楼层" }, { lv: 2, icon: "folder", t: "1. 首层" },
  { lv: 1, icon: "elevation", t: "剖面图" },
  { lv: 1, icon: "elevation", t: "立面图", open: true },
  { lv: 2, icon: "elevation", t: "北向立面图 (自动重建模型)" }, { lv: 2, icon: "elevation", t: "东向立面图 (自动重建模型)" },
  { lv: 2, icon: "elevation", t: "南向立面图 (自动重建模型)" }, { lv: 2, icon: "elevation", t: "西向立面图 (自动重建模型)" },
  { lv: 1, icon: "interior", t: "室内立面图" }, { lv: 1, icon: "worksheet", t: "工作图" }, { lv: 1, icon: "detail", t: "详图" }, { lv: 1, icon: "doc3d", t: "3D文档" },
  { lv: 1, icon: "box1", t: "3D", open: true },
  { lv: 2, icon: "box1", t: "普通透视图", sel: true }, { lv: 2, icon: "box2", t: "普通轴测图" },
  { lv: 1, icon: "schedule", t: "清单", open: true },
  { lv: 2, icon: "hatchbar", t: "元素", open: true },
  { lv: 3, icon: "schedule", t: "IES-01 墙壁一览表" },
];

@customElement("tree-row")
class TreeRow extends LitElement {
  @property({ attribute: false }) node!: Node;
  static styles = [base, css`
    :host { display: block; flex: 1 1 0; min-height: 0; }
    .row { display: flex; align-items: center; height: 100%; white-space: nowrap; gap: 2px; }
    .row.sel { background: #d9d9d9; }
    .lv0 { padding-left: 2px; } .lv1 { padding-left: 9px; } .lv2 { padding-left: 15px; } .lv3 { padding-left: 22px; }
    .tw { width: 7px; height: 7px; flex: none; }
    .tw path { fill: none; stroke: #333; stroke-width: 1.3; }
  `];
  render() {
    const n = this.node;
    return html`<div class="row lv${n.lv} ${n.sel ? "sel" : ""}">
      <svg class="tw" viewBox="0 0 7 7">${n.open ? svg`<path d="M1 2L3.500 5L6 2"/>` : nothing}</svg>${icon(n.icon, 12)}<span>${n.t}</span></div>`;
  }
}

@customElement("side-panel")
class SidePanel extends LitElement {
  static styles = [base, css`
    :host { display: flex; flex-direction: column; width: 115px; flex: none; background: #f0f0f0; border-left: 1px solid #b8b8b8; overflow: hidden; }
    .grip { height: 2px; margin: 1px 34px 4px 36px; border-bottom: 1px solid #c4c4c4; flex: none; }
    .grip.lower { margin-bottom: 5px; }
    .head { display: flex; gap: 1px; height: 18px; padding-left: 2px; flex: none; }
    .head button { background: #cdcdcd; }
    .head .one { width: 18px; } .head .two { flex: 1; justify-content: flex-end; padding-right: 2px; }
    .icons { display: flex; align-items: center; gap: 7px; height: 23px; padding: 0 4px; flex: none; }
    .icons .first { margin-right: 19px; }
    .lab { height: 13px; padding-left: 1px; color: #999; flex: none; }
    .slide { display: flex; align-items: center; height: 19px; padding-left: 21px; gap: 4px; flex: none; }
    .slide.ref { height: 20px; }
    .sw { width: 18px; height: 18px; gap: 5px; background: #c8c8c8; }
    .sw .pie { width: 9px; height: 9px; border-radius: 50%; opacity: 0.6; background: conic-gradient(#4a78c8 0 33%, #4aa868 33% 66%, #d86050 66%); }
    .sw .sq { width: 5px; height: 5px; background: #d3d0a0; margin: 0 2px; }
    .sw.end { width: 8px; margin-left: auto; }
    .scale { display: flex; flex-direction: column; }
    .scale i { height: 2px; margin: 0 3px; background: repeating-linear-gradient(90deg, #c9c9c9 0 1px, transparent 1px 4px); }
    .edit { display: flex; gap: 7px; padding-left: 23px; align-items: center; height: 23px; border-top: 1px solid #c4c4c4; border-bottom: 1px solid #c4c4c4; flex: none; }
    .maps { display: flex; align-items: center; height: 20px; padding-left: 1px; flex: none; }
    .maps button { width: 19px; height: 18px; flex: none; }
    .maps .chooser { width: 27px; gap: 6px; background: #dedede; border: 1px solid #d0d0d0; margin-right: 12px; }
    .maps .on { background: #bfdcf4; width: 20px; }
    .treebox { display: flex; flex: 1 1 280px; min-height: 0; background: #fff; overflow: hidden; }
    .tree { display: flex; flex-direction: column; flex: 1; min-width: 0; min-height: 284px; overflow: hidden; }
    .vbar { display: flex; flex-direction: column; align-items: center; width: 10px; flex: none; background: #f0f0f0; }
    .vbar i { width: 9px; flex: 1; background: #cdcdcd; margin-bottom: 120px; }
    .hbar { display: flex; align-items: center; height: 11px; flex: none; padding: 0 12px 0 3px; gap: 2px; }
    .hbar i { width: 67px; height: 10px; background: #cdcdcd; margin-right: auto; }
    .acts { display: flex; align-items: center; justify-content: flex-end; gap: 7px; height: 27px; padding-right: 3px; flex: none; }
    .section, .prop, .set, .id { flex: none; }
    .section { height: 12px; }
    .prop { display: flex; align-items: center; gap: 28px; height: 16px; padding-left: 1px; }
    .set { height: 15px; margin: 0 0 2px 1px; background: #dfdfdf; border: 1px solid #c4c4c4; }
    .id { display: flex; align-items: center; gap: 13px; height: 11px; padding-left: 5px; border-top: 1px solid #c4c4c4; color: #999; white-space: nowrap; }
  `];
  render() {
    return html`
      <div class="grip"></div>
      <div class="head"><button class="one" aria-label="trace">${icon("square2", 12, "dim")}</button><button class="two" aria-label="reference"><span class="tri small dim"></span></button></div>
      <div class="icons">${icon("swap", 12, "dim first")}${["moveSq", "rotSq", "syncSq", "refresh"].map((n) => icon(n, 12, "dim"))}</div>
      <div class="lab">参照：</div>
      <div class="slide ref"><button class="sw" aria-label="reference colour"><span class="sq"></span><span class="tri small dim"></span></button>
        <div class="scale"><input type="range" aria-label="reference" value="100" disabled><i></i></div><button class="sw end" aria-label="more"><span class="tri small dim"></span></button></div>
      <div class="lab">活动：</div>
      <div class="slide"><button class="sw" aria-label="active colour"><span class="pie"></span><span class="tri small dim"></span></button>
        <div class="scale"><input type="range" aria-label="active" value="100" disabled><i></i></div></div>
      <div class="edit">${["handSq", "overlap", "splitSq", "erase"].map((n) => icon(n, 12, "dim"))}</div>
      <div class="grip lower"></div>
      <div class="maps"><button class="chooser" aria-label="project chooser">${icon("pencilTree", 12)}<span class="tri small"></span></button>
        <button class="on" aria-label="project map">${icon("homes", 13)}</button><button aria-label="view map">${icon("folder", 13)}</button><button aria-label="layouts">${icon("pages", 13)}</button><button aria-label="publisher">${icon("docs", 13)}</button></div>
      <div class="treebox"><div class="tree">${TREE.map((n) => html`<tree-row .node=${n}></tree-row>`)}</div>
        <div class="vbar">${chevron(UP)}<i></i>${chevron(DOWN)}</div></div>
      <div class="hbar">${chevron(LEFT)}<i></i>${chevron(RIGHT)}</div>
      <div class="acts">${icon("saveView", 12)}${icon("newView", 12, "dim")}${icon("del", 11, "dim")}</div>
      <button class="section"><span class="tri down"></span>属性</button>
      <div class="prop">${icon("box1", 9)}普通透视图</div>
      <button class="set">设置...</button>
      <div class="id">${icon("docs", 10)}GRAPHISOFT ID</div>`;
  }
}

const MENU = ["文件(F)", "编辑(Q)", "视图(B)", "设计(I)", "文档(N)", "选项(O)", "团队工作(T)", "视窗(W)", "帮助 (H)"];

@customElement("app-root")
class AppRoot extends LitElement {
  static styles = [base, css`
    :host { position: relative; display: flex; flex-direction: column; height: 100vh; overflow: hidden; background: #fff; }
    .title { display: flex; align-items: center; height: 11px; flex: none; gap: 4px; line-height: 11px; }
    .logo { display: block; }
    .controls { display: flex; gap: 22px; margin-left: auto; padding-right: 11px; }
    .menu { display: flex; align-items: center; gap: 6px; height: 12px; flex: none; padding-left: 1px; }
    .docs { display: flex; gap: 1px; margin-left: auto; }
    .docs path { stroke: #000; stroke-width: 3; }
    tool-bars { flex: none; }
    .work { display: flex; flex: 1; min-height: 0; }
    .main { display: flex; flex-direction: column; flex: 1; min-width: 0; }
    .area { display: flex; flex: 1; min-height: 0; }
    .status { height: 11px; flex: none; background: #f0f0f0; white-space: nowrap; line-height: 13px; }
    profile-manager { position: absolute; top: 60px; right: 129px; bottom: 0; width: 158px; }
  `];
  render() {
    return html`
      <header class="title"><svg class="logo" width="7" height="11" viewBox="0 0 7 11"><path d="M0 1L3 0L7 9L5 7L2 7L0 9Z" fill="#1f3a7a"/></svg>无标题 - ARCHICAD 23
        <div class="controls">${icon("winmin", 8)}${icon("winmax", 7)}${icon("winclose", 7)}</div></header>
      <nav class="menu">${MENU.map((m) => html`<button>${m}</button>`)}<div class="docs">${icon("winmin", 6)}${icon("winmax", 6)}${icon("winclose", 5)}</div></nav>
      <tool-bars></tool-bars>
      <div class="work">
        <div class="main"><div class="area"><tool-box></tool-box><profile-editor></profile-editor></div>
          <div class="status">点击一个元素或划取一个选择区。按住Ctrl+Shift 在元素和子元素切换选择。</div></div>
        <side-panel></side-panel>
      </div>
      <profile-manager></profile-manager>`;
  }
}
